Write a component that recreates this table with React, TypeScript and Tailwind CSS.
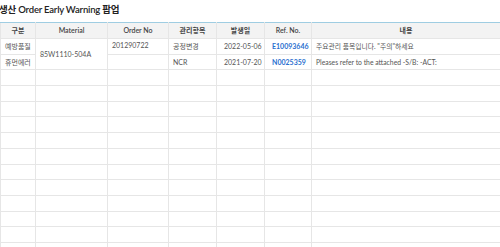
const cols = [35, 72, 61, 48, 48, 47, 189];

const rows = [
  { gubun: "예방품질", order: "201290722", item: "공정변경", date: "2022-05-06", ref: "E10093646", desc: '주요관리 품목입니다. "주의"하세요' },
  { gubun: "휴먼에러", order: "", item: "NCR", date: "2021-07-20", ref: "N0025359", desc: "Pleases refer to the attached -S/B: -ACT:" },
];

export default function App() {
  const cell = "border border-[#e6e6e6] px-[4px] align-middle whitespace-nowrap";
  return (
    <div className="h-[247px] w-[500px] overflow-hidden bg-white text-[#333] [font-family:Lato,'Noto_Sans_CJK_KR',sans-serif]">
      <h1 className="h-[22px] pt-[3px] -ml-[1px] text-[9.5px] font-semibold leading-[14px] tracking-[-0.2px] text-[#222]">
        생산 Order Early Warning 팝업
      </h1>
      <table className="w-[500px] table-fixed border-collapse border-t border-t-[#9fcde2] text-[7px]">
        <colgroup>
          {cols.map((w, i) => (
            <col key={i} style={{ width: w }} />
          ))}
        </colgroup>
        <thead>
          <tr className="h-[16px] bg-[#f3f3f3] text-[#444]">
            <th className={`${cell} border-t-[#9fcde2] text-center font-semibold`}>구분</th>
            <th className={`${cell} border-t-[#9fcde2] text-center font-semibold`}>Material</th>
            <th className={`${cell} border-t-[#9fcde2] text-center font-semibold`}>Order No</th>
            <th className={`${cell} border-t-[#9fcde2] text-center font-semibold`}>관리항목</th>
            <th className={`${cell} border-t-[#9fcde2] text-center font-semibold`}>발생일</th>
            <th className={`${cell} border-t-[#9fcde2] text-center font-semibold`}>Ref. No.</th>
            <th className={`${cell} border-t-[#9fcde2] text-center font-semibold`}>내용</th>
          </tr>
        </thead>
        <tbody className="text-[#555]">
          {rows.map((r, i) => (
            <tr key={i} className="h-[15.7px]">
              <td className={cell}>{r.gubun}</td>
              {i === 0 && (
                <td rowSpan={2} className={cell}>
                  85W1110-504A
                </td>
              )}
              <td className={`${cell} pb-[2px]`}>{r.order}</td>
              <td className={cell}>{r.item}</td>
              <td className={`${cell} pl-[7px]`}>{r.date}</td>
              <td className={`${cell} pl-[7px] font-bold text-[#2a6fcf]`}>{r.ref}</td>
              <td className={`${cell} text-[6.8px]`}>{r.desc}</td>
            </tr>
          ))}
          {Array.from({ length: 12 }).map((_, i) => (
            <tr key={`e${i}`} className="h-[15.7px]">
              {cols.map((_, j) => (
                <td key={j} className={cell}></td>
              ))}
            </tr>
          ))}
        </tbody>
      </table>
    </div>
  );
}
